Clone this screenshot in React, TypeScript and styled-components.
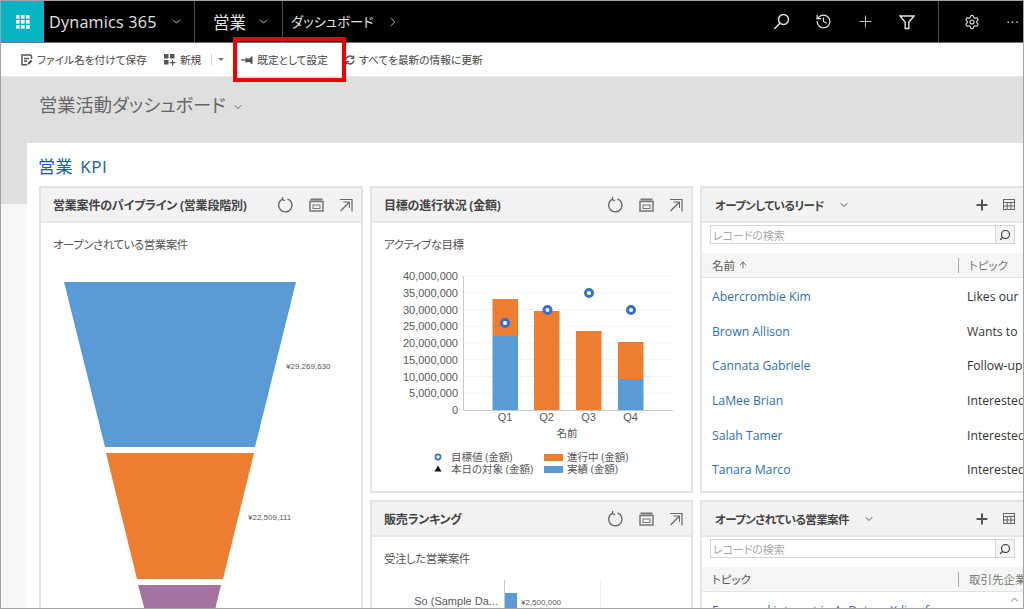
import React from 'react'
import styled, { createGlobalStyle } from 'styled-components'
import { Search, History, Plus, Settings, ChevronDown, ChevronRight, ArrowUp, ChevronUp } from 'lucide-react'

const FONT = '"Open Sans", "Noto Sans CJK JP", sans-serif'

const GlobalStyle = createGlobalStyle`
  html, body { margin: 0; padding: 0; background: #fff; }
  body { font-family: ${FONT}; font-feature-settings: "palt"; }
  * { box-sizing: border-box; }
`

const Frame = styled.div`
  position: relative;
  width: 1024px;
  height: 609px;
  border: 1px solid #a3a3a3;
  overflow: hidden;
  display: flex;
  flex-direction: column;
`

const NavBar = styled.header`
  flex: none;
  height: 42px;
  background: #000;
  border-bottom: 1px solid #6f6f6f;
  color: #e2e2e2;
  display: flex;
  align-items: stretch;
`

const Tile = styled.div`
  width: 43px;
  background: #06b4c4;
  display: flex;
  align-items: center;
  justify-content: center;
`

const NavSection = styled.div<{ $w?: number; $grow?: boolean; $line?: boolean }>`
  display: flex;
  align-items: center;
  ${p => (p.$w ? `width: ${p.$w}px;` : '')}
  ${p => (p.$grow ? 'flex: 1;' : '')}
  ${p => (p.$line ? 'border-left: 1px solid #4d4d4d;' : '')}
`

const Brand = styled.span`
  margin-left: 5px;
  font-size: 16.2px;
  letter-spacing: 0.2px;
  width: 121px;
`

const AppName = styled.span`
  margin-left: 18px;
  font-size: 16.5px;
  width: 44px;
`

const Crumb = styled.span`
  margin-left: 8px;
  font-size: 13.3px;
  width: 95px;
  white-space: nowrap;
`

const NavIcons = styled.div<{ $pad: string }>`
  margin-left: auto;
  padding: ${p => p.$pad};
  display: flex;
  align-items: center;
`

const NavIcon = styled.span`
  width: 42px;
  display: flex;
  justify-content: center;
  align-items: center;
`

const MoreDots = styled.span`
  width: 22px;
  margin-left: 9px;
  text-align: center;
  color: #d0d0d0;
  font-size: 13px;
  letter-spacing: 1px;
  white-space: nowrap;
`

const CommandBar = styled.div`
  flex: none;
  height: 34px;
  background: #fff;
  border-bottom: 1px solid #e8e8e8;
  padding-left: 20px;
  display: flex;
  align-items: center;
  color: #444;
  font-size: 10.7px;
`

const Command = styled.span<{ $ml: number }>`
  margin-left: ${p => p.$ml}px;
  display: flex;
  align-items: center;
  gap: 4px;
  white-space: nowrap;
`

const CommandSep = styled.span`
  width: 1px;
  height: 11px;
  margin: 0 6px 0 10px;
  background: #d0d0d0;
`

const Caret = styled.span`
  width: 0;
  height: 0;
  border-left: 3px solid transparent;
  border-right: 3px solid transparent;
  border-top: 3px solid #777;
`

const Highlight = styled.div`
  position: absolute;
  left: 232px;
  top: 36px;
  width: 113px;
  height: 45px;
  border: 4px solid #f00000;
`

const Main = styled.main`
  flex: 1;
  min-height: 0;
  background: linear-gradient(#dfdfdf 127px, #f7f7f7 127px);
  padding-left: 26px;
  display: flex;
  flex-direction: column;
`

const TitleRow = styled.div`
  flex: none;
  height: 66px;
  padding: 15px 0 0 12px;
  display: flex;
  align-items: flex-start;
  gap: 6px;
  color: #666;
  font-size: 18.3px;
  line-height: 26px;
`

const Panel = styled.section`
  flex: 1;
  min-height: 0;
  background: #fff;
  padding: 0 0 0 12px;
  overflow: hidden;
`

const SectionTitle = styled.h2`
  margin: 0 0 0 -1px;
  height: 43px;
  padding-top: 12px;
  color: #1160b7;
  font-size: 17px;
  font-weight: 400;
  line-height: 24px;
  word-spacing: 2px;
  letter-spacing: 0.6px;
`

const Board = styled.div`
  display: grid;
  grid-template-columns: 324px 323px 340px;
  grid-template-rows: 307px 200px;
  gap: 7px;
`

const Card = styled.article<{ $tall?: boolean }>`
  border: 2px solid #e1e5e5;
  background: #fff;
  overflow: hidden;
  display: flex;
  flex-direction: column;
  ${p => (p.$tall ? 'grid-row: span 2;' : '')}
`

const CardHead = styled.div`
  flex: none;
  height: 35px;
  background: #f2f2f2;
  border-bottom: 2px solid #e6e6e6;
  padding: 0 8px 0 12px;
  display: flex;
  align-items: center;
`

const CardTitle = styled.h3`
  margin: 0;
  color: #444;
  font-size: 12px;
  font-weight: 700;
  letter-spacing: -0.2px;
  white-space: nowrap;
`

const ListTitle = styled(CardTitle)`
  font-size: 11.5px;
  letter-spacing: -0.6px;
`

const CardTools = styled.div`
  margin-left: auto;
  display: flex;
  align-items: center;
  gap: 15px;
`

const CardSubtitle = styled.p`
  margin: 0;
  flex: none;
  height: 40px;
  padding: 13px 0 0 12px;
  color: #555;
  font-size: 11.5px;
  letter-spacing: -0.5px;
  line-height: 18px;
`

const ChartSvg = styled.svg`
  display: block;
  flex: none;
`

const ListCard = styled(Card)`
  border-right: none;
`

const ListHead = styled(CardHead)`
  padding: 0 25px 0 13px;
  gap: 14px;
`

const ListTools = styled.div`
  margin-left: auto;
  display: flex;
  align-items: center;
  gap: 13px;
  color: #555;
`

const SearchRow = styled.div`
  flex: none;
  height: 30px;
  padding: 2px 9px 0 8px;
  width: 322px;
`

const SearchBox = styled.div`
  height: 19px;
  border: 1px solid #d5d5d5;
  display: flex;
  align-items: center;
  justify-content: space-between;
  padding-left: 2px;
  color: #a9a9a9;
  font-size: 11px;
  letter-spacing: -0.1px;
`

const SearchButton = styled.span`
  width: 19px;
  height: 17px;
  border-left: 1px solid #d5d5d5;
  background: #f4f4f4;
  color: #333;
  display: flex;
  align-items: center;
  justify-content: center;
`

const TableHead = styled.div`
  flex: none;
  height: 25px;
  margin-bottom: 1px;
  background: #f5f5f5;
  border-bottom: 1px solid #e2e2e2;
  display: grid;
  grid-template-columns: 246px 1fr;
  align-items: center;
  padding-left: 10px;
  color: #555;
  font-size: 11.5px;
`

const HeadCell = styled.span<{ $line?: boolean }>`
  display: flex;
  align-items: center;
  gap: 3px;
  white-space: nowrap;
  ${p => (p.$line ? 'border-left: 1px solid #aaa; padding-left: 10px; height: 15px; color: #777;' : '')}
`

const Row = styled.div`
  flex: none;
  height: 34.7px;
  display: grid;
  grid-template-columns: 255px 1fr;
  align-items: center;
  padding-left: 10px;
  font-size: 12.2px;
  white-space: nowrap;
`

const NameLink = styled.a`
  color: #2b6fc4;
`

const Topic = styled.span`
  color: #333;
`

const ScrollArrow = styled.span`
  position: absolute;
  right: 3px;
  bottom: 3px;
  color: #666;
  display: flex;
`

const SmallText = styled.text<{ $size?: number; $color?: string }>`
  font-family: ${FONT};
  font-size: ${p => p.$size ?? 10}px;
  fill: ${p => p.$color ?? '#555'};
`

const AxisText = styled.text<{ $small?: boolean }>`
  font-family: "Liberation Sans", sans-serif;
  font-size: ${p => (p.$small ? 8 : 11)}px;
  fill: #595959;
`

const Waffle = () => (
  <svg width="14" height="14" viewBox="0 0 14 14" fill="#fff">
    {[0, 5, 10].flatMap(y =>
      [0, 5, 10].map(x => <rect key={`${x}-${y}`} x={x} y={y} width="3.6" height="3.6" />)
    )}
  </svg>
)

const NavSearchIcon = () => (
  <svg width="17" height="17" viewBox="0 0 17 17" fill="none" stroke="currentColor" strokeWidth="1.5">
    <circle cx="10.5" cy="6.500" r="5" />
    <path d="M7 10.200L1.200 16" />
  </svg>
)

const FilterIcon = () => (
  <svg width="16" height="16" viewBox="0 0 16 16" fill="none" stroke="currentColor" strokeWidth="1.4">
    <path d="M1 2h14L9.800 8.300V14.500H6.200V8.300z" />
  </svg>
)

const SaveIcon = () => (
  <svg width="12" height="12" viewBox="0 0 12 12" fill="none" stroke="#555" strokeWidth="1.5">
    <path d="M6 10.800H1V1h8.500l1 1v3" />
    <path d="M3 4.400h5M3 7h3" />
    <path d="M6.500 10.800l.4-2 3-3 1.500 1.500-3 3z" fill="#555" stroke="none" />
  </svg>
)

const NewIcon = () => (
  <svg width="12" height="12" viewBox="0 0 12 12" fill="#555">
    <rect x="0" y="0" width="4.500" height="4.500" />
    <rect x="6" y="0" width="4.500" height="4.500" />
    <rect x="0" y="6" width="4.500" height="4.500" />
    <path d="M8 6h1.200v2H11.500v1.200H9.200v2.400H8V9.200H5.800V8H8z" />
  </svg>
)

const PinIcon = () => (
  <svg width="12" height="8" viewBox="0 0 12 8" fill="#555">
    <rect x="0" y="3.300" width="5" height="1.300" />
    <path d="M4.500 1.500l2 1h2.500l1-2h1.500v7.500h-1.500l-1-2H6.500l-2 1z" />
  </svg>
)

const RefreshAllIcon = () => (
  <svg width="10" height="10" viewBox="0 0 10 10" fill="none" stroke="#555" strokeWidth="1.600">
    <path d="M1 4.500A4 4 0 0 1 8 2.500" />
    <path d="M9 5.500A4 4 0 0 1 2 7.500" />
    <path d="M8.600 0.500v3h-3" strokeWidth="1.200" />
    <path d="M1.400 9.500v-3h3" strokeWidth="1.200" />
  </svg>
)

const RefreshIcon = () => (
  <svg width="17" height="17" viewBox="0 0 17 17" fill="none" stroke="#666" strokeWidth="1.400">
    <path d="M10.500 2.800A6.700 6.700 0 1 1 5 3.300" />
    <path d="M5.800 0.800L5.200 3.600 8 4.600" strokeWidth="1.200" />
  </svg>
)

const ViewIcon = () => (
  <svg width="15" height="14" viewBox="0 0 15 14" fill="none" stroke="#777" strokeWidth="1.500">
    <path d="M1 3.500h13v9.500H1z" />
    <path d="M1.500 1.500h12" strokeWidth="2" />
    <rect x="4" y="7" width="7" height="3.500" strokeWidth="1" />
  </svg>
)

const ExpandIcon = () => (
  <svg width="14" height="14" viewBox="0 0 14 14" fill="none" stroke="#666" strokeWidth="1.200">
    <path d="M1 1.500h12v12" />
    <path d="M10.500 4L1.500 13" />
    <path d="M4.500 4h6v6" strokeWidth="1" />
  </svg>
)

const GridIcon = () => (
  <svg width="12" height="11" viewBox="0 0 12 11" fill="none" stroke="#666" strokeWidth="1">
    <rect x="0.500" y="0.500" width="11" height="10" />
    <path d="M0.500 3.500h11M0.500 7h11M4.200 3.500v7M7.900 3.500v7" />
  </svg>
)

const ChartTools = () => (
  <CardTools>
    <RefreshIcon />
    <ViewIcon />
    <ExpandIcon />
  </CardTools>
)

const funnel = [
  { color: '#5b9bd5', points: '64,282 296,282 255,447 105,447' },
  { color: '#ed7d31', points: '106,453 254,453 223,579 137,579' },
  { color: '#a5719f', points: '138,585 221,585 213,618 147,618' },
]

const goalTicks = [0, 1, 2, 3, 4, 5, 6, 7, 8]
const y0 = 410
const step = 16.75

const quarters = [
  { name: 'Q1', x: 492.5, top: 299, blue: 336, mx: 505, my: 323 },
  { name: 'Q2', x: 534, top: 311, blue: 410, mx: 547.5, my: 310 },
  { name: 'Q3', x: 576, top: 331, blue: 410, mx: 589, my: 293 },
  { name: 'Q4', x: 618, top: 342, blue: 379, mx: 631, my: 310 },
]

const Marker = ({ x, y }: { x: number; y: number }) => (
  <circle cx={x} cy={y} r={3.5} fill="#fff" stroke="#3a6fc8" strokeWidth="3" />
)

const GoalChart = () => (
  <ChartSvg width="319" height="228" viewBox="372 263 319 228">
    {goalTicks.map(i => (
      <g key={i}>
        {i > 0 && <line x1="463" x2="673" y1={y0 - i * step} y2={y0 - i * step} stroke="#f1f3f8" />}
        <AxisText x="458" y={y0 - i * step + 4} textAnchor="end">
          {(i * 5000000).toLocaleString('en-US')}
        </AxisText>
      </g>
    ))}
    {quarters.map(q => (
      <g key={q.name}>
        <rect x={q.x} y={q.top} width="25.500" height={q.blue - q.top} fill="#ed7d31" />
        <rect x={q.x} y={q.blue} width="25.500" height={y0 - q.blue} fill="#5b9bd5" />
        <AxisText x={q.x + 12.500} y="421" textAnchor="middle">{q.name}</AxisText>
      </g>
    ))}
    <line x1="463.500" x2="463.500" y1="276" y2="410" stroke="#c6cad0" />
    <line x1="463" x2="673" y1="410.500" y2="410.500" stroke="#c6cad0" />
    {quarters.map(q => <Marker key={q.name} x={q.mx} y={q.my} />)}
    <SmallText x="567" y="437" textAnchor="middle" $size={10.500}>名前</SmallText>
    <circle cx="438" cy="457" r="2.600" fill="#fff" stroke="#3a6fc8" strokeWidth="1.600" />
    <SmallText x="451" y="461" $size={10.500}>目標値 (金額)</SmallText>
    <path d="M438 465.500l3.500 6h-7z" fill="#111" />
    <SmallText x="451" y="473" $size={10.500}>本日の対象 (金額)</SmallText>
    <rect x="544" y="454" width="19" height="7" fill="#ed7d31" />
    <SmallText x="567" y="461" $size={10.500}>進行中 (金額)</SmallText>
    <rect x="544" y="466" width="19" height="7" fill="#5b9bd5" />
    <SmallText x="567" y="473" $size={10.500}>実績 (金額)</SmallText>
  </ChartSvg>
)

const FunnelChart = () => (
  <ChartSvg width="320" height="350" viewBox="41 263 320 350">
    {funnel.map(f => <polygon key={f.color} points={f.points} fill={f.color} />)}
    <AxisText $small x="286" y="369">¥29,269,630</AxisText>
    <AxisText $small x="248" y="520">¥22,509,111</AxisText>
  </ChartSvg>
)

const RankingChart = () => (
  <ChartSvg width="319" height="40" viewBox="372 577 319 40">
    <line x1="504.500" x2="504.500" y1="580" y2="612" stroke="#c6cad0" />
    <line x1="600.500" x2="600.500" y1="580" y2="612" stroke="#eceef2" />
    <rect x="505" y="593" width="12" height="20" fill="#5b9bd5" />
    <AxisText x="498" y="605" textAnchor="end">So (Sample Da...</AxisText>
    <AxisText $small x="521" y="605">¥2,500,000</AxisText>
  </ChartSvg>
)

const leads = [
  ['Abercrombie Kim', 'Likes our'],
  ['Brown Allison', 'Wants to'],
  ['Cannata Gabriele', 'Follow-up'],
  ['LaMee Brian', 'Interested'],
  ['Salah Tamer', 'Interested'],
  ['Tanara Marco', 'Interested'],
]

const ListHeader = ({ title }: { title: string }) => (
  <>
    <ListHead>
      <ListTitle>{title}</ListTitle>
      <ChevronDown size={12} color="#555" />
      <ListTools>
        <Plus size={16} strokeWidth={3} />
        <GridIcon />
      </ListTools>
    </ListHead>
    <SearchRow>
      <SearchBox>
        レコードの検索
        <SearchButton>
          <Search size={12} strokeWidth={2.2} style={{ transform: 'scaleX(-1)' }} />
        </SearchButton>
      </SearchBox>
    </SearchRow>
  </>
)

export default function App() {
  return (
    <Frame>
      <GlobalStyle />
      <NavBar>
        <Tile>
          <Waffle />
        </Tile>
        <NavSection $w={150}>
          <Brand>Dynamics 365</Brand>
          <ChevronDown size={13} strokeWidth={1.6} />
        </NavSection>
        <NavSection $w={88} $line>
          <AppName>営業</AppName>
          <ChevronDown size={13} strokeWidth={1.6} />
        </NavSection>
        <NavSection $grow $line>
          <Crumb>ダッシュボード</Crumb>
          <ChevronRight size={14} strokeWidth={1.4} />
          <NavIcons $pad="0 10px 0 0">
            <NavIcon><NavSearchIcon /></NavIcon>
            <NavIcon><History size={17} strokeWidth={1.7} /></NavIcon>
            <NavIcon><Plus size={19} strokeWidth={1.1} /></NavIcon>
            <NavIcon><FilterIcon /></NavIcon>
          </NavIcons>
        </NavSection>
        <NavSection $w={85} $line>
          <NavIcons $pad="0 0 0 12px">
            <NavIcon><Settings size={16} strokeWidth={1.7} /></NavIcon>
            <MoreDots>···</MoreDots>
          </NavIcons>
        </NavSection>
      </NavBar>

      <CommandBar>
        <Command $ml={0}><SaveIcon />ファイル名を付けて保存</Command>
        <Command $ml={17}><NewIcon />新規</Command>
        <CommandSep />
        <Caret />
        <Command $ml={17}><PinIcon />既定として設定</Command>
        <Command $ml={17}><RefreshAllIcon />すべてを最新の情報に更新</Command>
      </CommandBar>

      <Main>
        <TitleRow>
          営業活動ダッシュボード
          <ChevronDown size={12} strokeWidth={2} style={{ marginTop: 9 }} />
        </TitleRow>
        <Panel>
          <SectionTitle>営業 KPI</SectionTitle>
          <Board>
            <Card $tall>
              <CardHead>
                <CardTitle>営業案件のパイプライン (営業段階別)</CardTitle>
                <ChartTools />
              </CardHead>
              <CardSubtitle>オープンされている営業案件</CardSubtitle>
              <FunnelChart />
            </Card>
            <Card>
              <CardHead>
                <CardTitle>目標の進行状況 (金額)</CardTitle>
                <ChartTools />
              </CardHead>
              <CardSubtitle>アクティブな目標</CardSubtitle>
              <GoalChart />
            </Card>
            <ListCard>
              <ListHeader title="オープンしているリード" />
              <TableHead>
                <HeadCell>名前 <ArrowUp size={10} /></HeadCell>
                <HeadCell $line>トピック</HeadCell>
              </TableHead>
              {leads.map(([name, topic]) => (
                <Row key={name}>
                  <NameLink>{name}</NameLink>
                  <Topic>{topic}</Topic>
                </Row>
              ))}
            </ListCard>
            <Card>
              <CardHead>
                <CardTitle>販売ランキング</CardTitle>
                <ChartTools />
              </CardHead>
              <CardSubtitle>受注した営業案件</CardSubtitle>
              <RankingChart />
            </Card>
            <ListCard>
              <ListHeader title="オープンされている営業案件" />
              <TableHead>
                <HeadCell>トピック</HeadCell>
                <HeadCell $line>取引先企業</HeadCell>
              </TableHead>
              <Row>
                <NameLink>Expressed interest in A. Datum X-line f</NameLink>
              </Row>
            </ListCard>
          </Board>
        </Panel>
      </Main>
      <ScrollArrow><ChevronUp size={11} /></ScrollArrow>
      <Highlight />
    </Frame>
  )
}
